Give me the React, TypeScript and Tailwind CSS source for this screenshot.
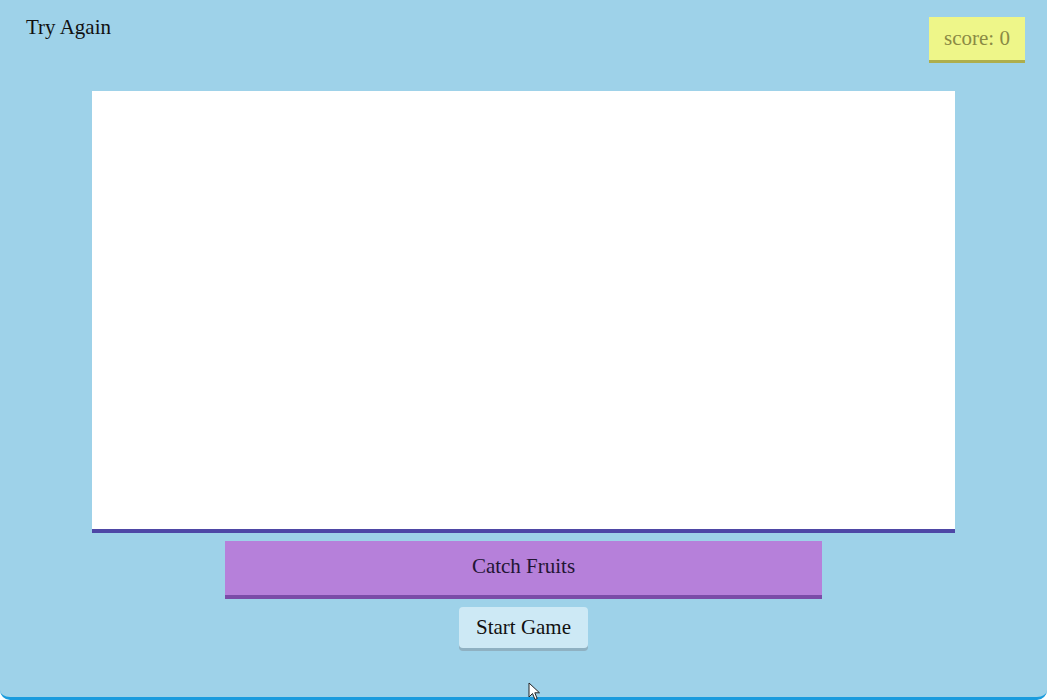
import React from "react";

export default function App() {
  const serif = { fontFamily: '"Liberation Serif", "Times New Roman", serif' };
  return (
    <div className="w-[1050px] h-[700px] bg-white relative overflow-hidden" style={serif}>
      <div className="w-[1047px] h-[700px] bg-[#9ed2e9] rounded-b-[10px] border-b-[3px] border-[#1a9cde] flex flex-col items-center">
        <div className="w-full h-[91px] flex justify-between items-start pl-[26px] pr-[22px]">
          <div className="mt-[16px] text-[21px] leading-[22px] text-[#111]">Try Again</div>
          <div className="mt-[17px] w-[96px] h-[46px] bg-[#eef689] border-b-[3px] border-[#aeae4c] flex items-center justify-center text-[21px] leading-none text-[#8a8a44]">
            score: 0
          </div>
        </div>
        <div className="w-[863px] h-[442px] bg-white border-b-[4px] border-[#4e47a6]" />
        <div className="mt-[8px] w-[597px] h-[58px] bg-[#b680da] border-b-[4px] border-[#7b4ca8] flex items-center justify-center pb-[3px] text-[21px] text-[#221533]">
          Catch Fruits
        </div>
        <div className="mt-[8px] w-[129px] h-[41px] bg-[#cde9f5] rounded-[4px] shadow-[0_3px_0_#8fb1c2] flex items-center justify-center text-[21px] text-[#111]">
          Start Game
        </div>
      </div>
      <svg className="absolute left-[528px] top-[682px]" width="14" height="20" viewBox="0 0 14 20">
        <path d="M1 1 L1 15 L4.5 11.5 L7 17.5 L9.2 16.6 L6.8 10.8 L11.5 10.8 Z" fill="#fff" stroke="#222" strokeWidth="1" />
      </svg>
    </div>
  );
}
